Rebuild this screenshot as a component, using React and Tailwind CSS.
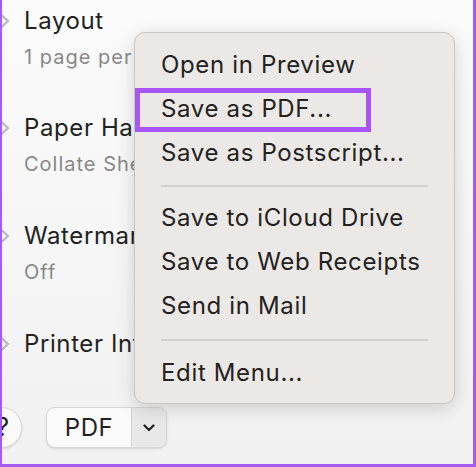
import React from "react";

const font = { fontFamily: "Inter, 'Noto Sans', 'Liberation Sans', sans-serif" };

function Chevron() {
  return (
    <svg width="10" height="16" viewBox="0 0 10 16" className="shrink-0">
      <path d="M1.5 2 L8 8 L1.5 14" fill="none" stroke="#b8b8b8" strokeWidth="2.2" strokeLinecap="round" strokeLinejoin="round" />
    </svg>
  );
}

function Section({ title, sub, h }) {
  return (
    <div className={`flex flex-col ${h}`}>
      <div className="flex items-center -ml-[3px]">
        <Chevron />
        <span className="ml-[14px] text-[24px] tracking-[0.6px] text-[#222] leading-[30px] whitespace-nowrap">{title}</span>
      </div>
      {sub && (
        <div className="ml-[21px] mt-[8px] text-[20px] tracking-[1px] text-[#888] leading-[26px] whitespace-nowrap">{sub}</div>
      )}
    </div>
  );
}

function Item({ children }) {
  return <div className="h-[44px] leading-[44px] pl-[26px] whitespace-nowrap">{children}</div>;
}

export default function App() {
  return (
    <div style={font} className="relative w-[476px] h-[467px] overflow-hidden border-l-2 border-r-[3px] border-b-[3px] border-[#a55af0]">
      <div className="absolute inset-0 bg-gradient-to-b from-[#fbfbfb] to-[#f1f1f1]" />
      <div className="relative flex flex-col pt-[6px] pl-[1px]">
        <Section title="Layout" sub="1 page per sheet" h="h-[107px]" />
        <Section title="Paper Handling" sub="Collate Sheets" h="h-[108px]" />
        <Section title="Watermark" sub="Off" h="h-[108px]" />
        <Section title="Printer Info" h="h-[78px]" />
        <div className="flex items-center">
          <div className="-ml-[23px] w-[42px] h-[41px] rounded-full bg-[#fafafa] border border-[#dadada] shadow-sm flex items-center justify-end pr-[12px] text-[25px] text-[#222]">?</div>
          <div className="ml-[24px] flex h-[41px] rounded-[9px] border border-[#d8d8d8] bg-[#fafafa] shadow-sm overflow-hidden">
            <div className="w-[84px] flex items-center justify-center text-[24px] tracking-[0.5px] text-[#222]">PDF</div>
            <div className="w-[35px] border-l border-[#d2d2d2] bg-[#e8e8e8] flex items-center justify-center">
              <svg width="12" height="8" viewBox="0 0 12 8"><path d="M1.5 1.5 L6 6 L10.5 1.5" fill="none" stroke="#222" strokeWidth="2.2" strokeLinecap="round" strokeLinejoin="round" /></svg>
            </div>
          </div>
        </div>
      </div>

      <div className="absolute left-[132px] top-[32px] w-[321px] h-[372px] rounded-[11px] bg-[#ece8e5] border border-[#c9c5c2] shadow-[0_4px_18px_rgba(0,0,0,0.16)] pt-[10px] text-[24px] tracking-[0.65px] text-[#222]">
        <Item>Open in Preview</Item>
        <Item>Save as PDF...</Item>
        <Item>Save as Postscript...</Item>
        <div className="mx-[26px] mt-[10px] mb-[9px] h-[2px] bg-[#d3cfcc]" />
        <Item>Save to iCloud Drive</Item>
        <Item>Save to Web Receipts</Item>
        <Item>Send in Mail</Item>
        <div className="mx-[26px] mt-[11px] mb-[10px] h-[2px] bg-[#d3cfcc]" />
        <Item>Edit Menu...</Item>
        <div className="absolute left-0 top-[55px] w-[236px] h-[44px] border-[5px] border-[#a855f7]" />
      </div>
    </div>
  );
}
